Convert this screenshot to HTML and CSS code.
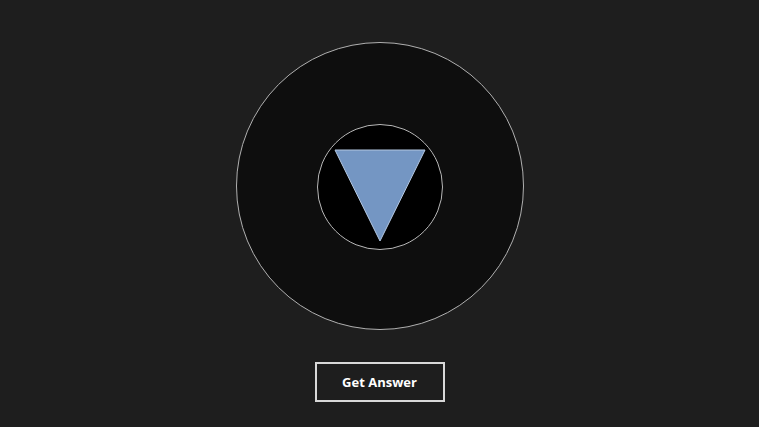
FILE: index.html
```html
<!DOCTYPE html>
<html>
<head>
<meta charset="utf-8">
<link rel="stylesheet" href="styles.css">
</head>
<body>
<main class="app">
  <div class="ball">
    <div class="window">
      <svg class="die" width="124" height="124" viewBox="0 0 124 124">
        <polygon points="17,25 107,25 62,116" fill="#7496c3" stroke="#b4c8e2" stroke-width="1" stroke-linejoin="miter"/>
      </svg>
    </div>
  </div>
  <button class="answer">Get Answer</button>
</main>
</body>
</html>
```
FILE: styles.css
```css
html, body {
  margin: 0;
  padding: 0;
  background: #1e1e1e;
  width: 759px;
  height: 427px;
  overflow: hidden;
}
.app {
  display: flex;
  flex-direction: column;
  align-items: center;
  padding-top: 42px;
}
.ball {
  box-sizing: border-box;
  width: 288px;
  height: 288px;
  border: 1px solid #b0b0b0;
  border-radius: 50%;
  background: #0e0e0e;
  display: flex;
  align-items: center;
  justify-content: center;
}
.window {
  box-sizing: border-box;
  width: 126px;
  height: 126px;
  margin-top: 2px;
  border: 1px solid #b8b8b8;
  border-radius: 50%;
  background: #000;
  display: flex;
}
.die {
  display: block;
}
.answer {
  margin-top: 32px;
  box-sizing: border-box;
  width: 130px;
  height: 40px;
  border: 2px solid #d8d8d8;
  background: #1e1e1e;
  color: #fff;
  font-family: "Open Sans", "Noto Sans", sans-serif;
  font-weight: 700;
  font-size: 13px;
  padding: 0 0 1px 0;
}
```
